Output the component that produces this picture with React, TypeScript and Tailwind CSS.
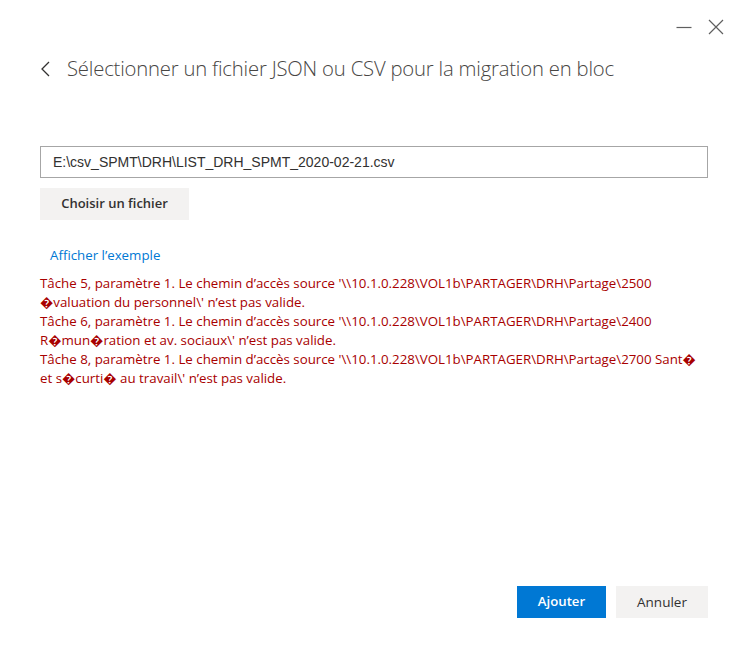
import React from "react";

const errors = [
  "Tâche 5, paramètre 1. Le chemin d’accès source '\\\\10.1.0.228\\VOL1b\\PARTAGER\\DRH\\Partage\\2500 \uFFFDvaluation du personnel\\' n’est pas valide.",
  "Tâche 6, paramètre 1. Le chemin d’accès source '\\\\10.1.0.228\\VOL1b\\PARTAGER\\DRH\\Partage\\2400 R\uFFFDmun\uFFFDration et av. sociaux\\' n’est pas valide.",
  "Tâche 8, paramètre 1. Le chemin d’accès source '\\\\10.1.0.228\\VOL1b\\PARTAGER\\DRH\\Partage\\2700 Sant\uFFFD et s\uFFFDcurti\uFFFD au travail\\' n’est pas valide.",
];

export default function App() {
  return (
    <div
      className="w-[746px] h-[658px] bg-white flex flex-col text-[#323130]"
      style={{ fontFamily: '"Open Sans", "Noto Sans", sans-serif' }}
    >
      {/* window controls */}
      <div className="flex justify-end items-center gap-[16px] h-[52px] pr-[22px] pt-[1px]">
        <svg width="16" height="16" viewBox="0 0 16 16" className="text-[#5f5f5f]">
          <path d="M0.5 8.5h15" stroke="currentColor" strokeWidth="1.2" />
        </svg>
        <svg width="16" height="16" viewBox="0 0 16 16" className="text-[#5f5f5f]">
          <path d="M1 1l14 14M15 1L1 15" stroke="currentColor" strokeWidth="1.2" />
        </svg>
      </div>

      {/* header */}
      <div className="flex items-center pl-[41px] h-[34px]">
        <svg width="9" height="16" viewBox="0 0 9 16" className="text-[#323130]">
          <path d="M8 1L1 8l7 7" stroke="currentColor" strokeWidth="1.3" fill="none" />
        </svg>
        <h1 className="ml-[17px] -mt-[1px] text-[20.3px] font-light text-[#484644] tracking-[-0.2px]">
          Sélectionner un fichier JSON ou CSV pour la migration en bloc
        </h1>
      </div>

      {/* body */}
      <div className="flex flex-col pl-[40px] pr-[38px] mt-[60px] flex-1">
        <div
          className="h-[32px] border border-[#a6a6a6] flex items-center pl-[12px] text-[14px] text-[#323130]"
          style={{ fontFamily: '"Liberation Sans", Arial, sans-serif' }}
        >
          E:\csv_SPMT\DRH\LIST_DRH_SPMT_2020-02-21.csv
        </div>

        <button className="mt-[10px] w-[149px] h-[32px] bg-[#f3f2f1] text-[13px] font-semibold text-[#323130]">
          Choisir un fichier
        </button>

        <a className="mt-[25px] ml-[10px] text-[13.3px] text-[#0078d4] leading-[20px]">
          Afficher l’exemple
        </a>

        <div className="mt-[9px] text-[13.3px] leading-[19px] text-[#a80000]">
          {errors.map((e, i) => (
            <p key={i}>{e}</p>
          ))}
        </div>

        <div className="mt-auto mb-[40px] flex justify-end gap-[10px]">
          <button className="w-[89px] h-[32px] bg-[#0078d4] text-white text-[13.2px] font-semibold">
            Ajouter
          </button>
          <button className="w-[92px] h-[32px] bg-[#f3f2f1] text-[#323130] text-[13.5px]">
            Annuler
          </button>
        </div>
      </div>
    </div>
  );
}
